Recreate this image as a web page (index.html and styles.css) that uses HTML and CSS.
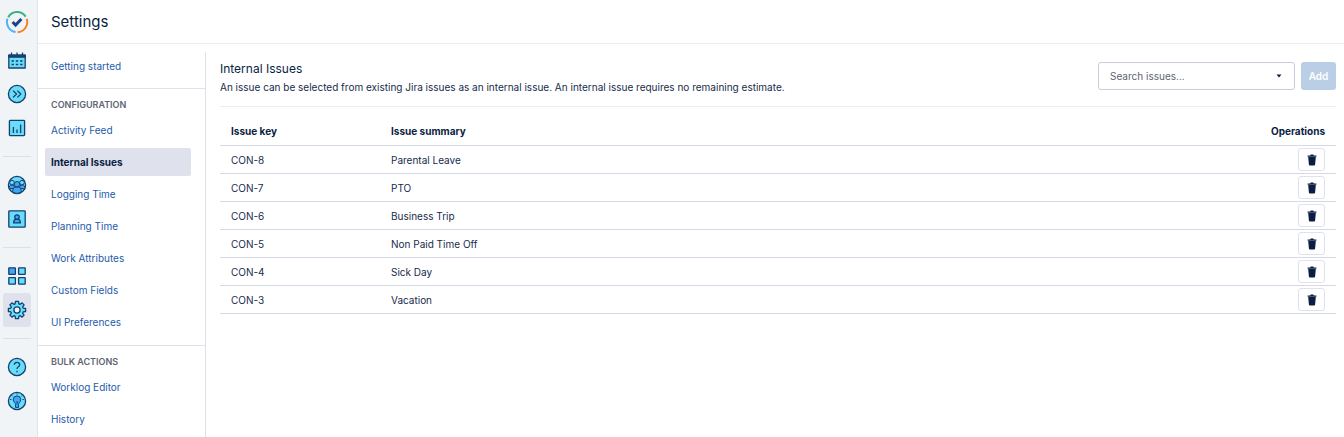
FILE: index.html
```html
<!DOCTYPE html>
<html lang="en">
<head>
    <meta charset="UTF-8">
    <meta name="viewport" content="width=device-width, initial-scale=1.0">
    <title>Settings</title>
    <link rel="stylesheet" href="styles.css">
</head>
<body>
    <svg class="sprite" aria-hidden="true">
        <symbol id="trash" viewBox="0 0 10 12">
            <path d="M.6 1.4h2.6L3.7.6h2.6l.5.8h2.6v1.4H.6z"/>
            <path d="M1.2 3.1h7.6l-.7 7.4q-.1.9-1 .9H2.9q-.9 0-1-.9z"/>
        </symbol>
    </svg>

    <nav class="rail" aria-label="Main">
        <a class="logo" href="#" aria-label="Home">
            <svg width="24" height="24" viewBox="0 0 24 24" fill="none">
                <path d="M3.2 7.2A10.2 10.2 0 0 1 20.6 6.6" stroke="#36b37e" stroke-width="2"/>
                <path d="M21.7 8.7A10.2 10.2 0 0 1 12.6 22.2" stroke="#f58220" stroke-width="2"/>
                <path d="M10.6 22.1A10.2 10.2 0 0 1 2.5 8.6" stroke="#4fb3f6" stroke-width="2"/>
                <path d="M7.6 12l3 3 5.8-6" stroke="#1d4484" stroke-width="3"/>
            </svg>
        </a>
        <a class="rail-item" href="#" aria-label="Calendar">
            <svg class="icon" viewBox="0 0 20 20">
                <path class="c" d="M1.8 5.2h16.4V18H1.8z"/>
                <path class="d" d="M1.8 5.2h16.4v2H1.8z"/>
                <path class="l" d="M4.5 2.6v3M10 2.6v3M15.5 2.6v3"/>
                <path class="l" d="M4.5 11h2.4M8.8 11h2.4M13.1 11h2.4M4.5 14.5h2.4M8.8 14.5h2.4M13.1 14.5h2.4"/>
            </svg>
        </a>
        <a class="rail-item" href="#" aria-label="Expand">
            <svg class="icon" viewBox="0 0 20 20">
                <circle class="c" cx="10" cy="10" r="8.6"/>
                <path class="l" d="M6.1 6.6L9.5 10l-3.4 3.4M10.4 6.6l3.4 3.4-3.4 3.4"/>
            </svg>
        </a>
        <a class="rail-item" href="#" aria-label="Reports">
            <svg class="icon" viewBox="0 0 20 20">
                <rect class="c" x="2.4" y="2.4" width="15.2" height="15.2" rx=".8"/>
                <path class="l" d="M6.4 9v6M10 11.5V15M13.6 6.5V15"/>
            </svg>
        </a>
        <hr class="rail-line">
        <a class="rail-item" href="#" aria-label="Teams">
            <svg class="icon" viewBox="0 0 20 20">
                <circle class="c" cx="10" cy="10" r="8.6"/>
                <g class="thin">
                    <path class="b" d="M2.4 14c-.6-2.6.4-3.9 2.4-3.9s2.8 1 2.6 3zM17.6 14c.6-2.6-.4-3.9-2.4-3.9s-2.8 1-2.6 3z"/>
                    <circle class="c" cx="5" cy="7.6" r="2.3"/>
                    <circle class="c" cx="15" cy="7.6" r="2.3"/>
                    <path class="b" d="M5.8 17.4c-.3-3.8 1.2-5.4 4.2-5.4s4.500 1.600 4.200 5.400q-4.200 2-8.400 0z"/>
                    <circle class="b" cx="10" cy="9.2" r="2.7"/>
                </g>
            </svg>
        </a>
        <a class="rail-item" href="#" aria-label="Accounts">
            <svg class="icon" viewBox="0 0 20 20">
                <rect class="c" x="1.8" y="1.8" width="16.4" height="16.4" rx=".8"/>
                <path class="b" d="M6.6 13.9c0-2.6 1.2-3.8 3.4-3.8s3.4 1.2 3.4 3.8z"/>
                <circle class="b" cx="10" cy="8" r="2.2"/>
            </svg>
        </a>
        <hr class="rail-line">
        <a class="rail-item" href="#" aria-label="Apps">
            <svg class="icon" viewBox="0 0 20 20">
                <rect class="b" x="1.8" y="1.8" width="6.6" height="6.6" rx=".4"/>
                <rect class="c" x="11.6" y="1.8" width="6.6" height="6.6" rx=".4"/>
                <rect class="c" x="1.8" y="11.6" width="6.6" height="6.6" rx=".4"/>
                <rect class="c" x="11.6" y="11.6" width="6.6" height="6.6" rx=".4"/>
            </svg>
        </a>
        <a class="rail-item active" href="#" aria-label="Settings">
            <svg class="icon" viewBox="0 0 20 20">
                <path class="c" d="M8.5 1.4h3l.4 2.4 1.2.5 2-1.4 2 2-1.4 2 .5 1.2 2.4.4v3l-2.4.4-.5 1.2 1.4 2-2 2-2-1.4-1.2.5-.4 2.4h-3l-.4-2.4-1.2-.5-2 1.4-2-2 1.4-2-.5-1.2-2.4-.4v-3l2.4-.4.5-1.2-1.4-2 2-2 2 1.4 1.2-.5z"/>
                <circle class="w" cx="10" cy="10" r="3.1"/>
            </svg>
        </a>
        <hr class="rail-line">
        <a class="rail-item" href="#" aria-label="Help">
            <svg class="icon" viewBox="0 0 20 20">
                <circle class="c" cx="10" cy="10" r="8.6"/>
                <path class="l" d="M7.3 7.8Q7.4 5.3 10 5.3t2.7 2.4Q12.7 9 11.3 9.8 10 10.5 10 12M10 13.7v1.5"/>
            </svg>
        </a>
        <a class="rail-item" href="#" aria-label="Tips">
            <svg class="icon" viewBox="0 0 20 20">
                <circle class="c" cx="10" cy="10" r="8.6"/>
                <path class="b thin" d="M8.5 13.6c0-2-2.2-2.6-2.2-5a3.7 3.7 0 0 1 7.4 0c0 2.4-2.2 3-2.2 5v2.8h-3z"/>
                <path class="l thin" d="M10 13.5V10M10 2.4v1.2M4.8 4.4l1 1M15.2 4.4l-1 1M3.2 8.5h1.3M16.8 8.5h-1.3"/>
            </svg>
        </a>
    </nav>

    <div class="page">
        <header class="page-header">
            <h1>Settings</h1>
        </header>

        <div class="columns">
            <nav class="menu" aria-label="Settings">
                <div class="menu-group">
                    <a href="#">Getting started</a>
                </div>
                <div class="menu-group">
                    <h2>CONFIGURATION</h2>
                    <a href="#">Activity Feed</a>
                    <a class="selected" href="#">Internal Issues</a>
                    <a href="#">Logging Time</a>
                    <a href="#">Planning Time</a>
                    <a href="#">Work Attributes</a>
                    <a href="#">Custom Fields</a>
                    <a href="#">UI Preferences</a>
                </div>
                <div class="menu-group">
                    <h2>BULK ACTIONS</h2>
                    <a href="#">Worklog Editor</a>
                    <a href="#">History</a>
                </div>
            </nav>

            <main class="content">
                <div class="content-header">
                    <div class="intro">
                        <h2>Internal Issues</h2>
                        <p>An issue can be selected from existing Jira issues as an internal issue. An internal issue requires no remaining estimate.</p>
                    </div>
                    <form class="add-form">
                        <select class="search" aria-label="Search issues">
                            <option>Search issues...</option>
                        </select>
                        <button class="add" type="button" disabled>Add</button>
                    </form>
                </div>

                <table class="issues">
                    <thead>
                        <tr><th class="key">Issue key</th><th>Issue summary</th><th class="ops">Operations</th></tr>
                    </thead>
                    <tbody>
                        <tr><td>CON-8</td><td>Parental Leave</td><td class="ops"><button class="delete" type="button" aria-label="Delete CON-8"><svg><use href="#trash"/></svg></button></td></tr>
                        <tr><td>CON-7</td><td>PTO</td><td class="ops"><button class="delete" type="button" aria-label="Delete CON-7"><svg><use href="#trash"/></svg></button></td></tr>
                        <tr><td>CON-6</td><td>Business Trip</td><td class="ops"><button class="delete" type="button" aria-label="Delete CON-6"><svg><use href="#trash"/></svg></button></td></tr>
                        <tr><td>CON-5</td><td>Non Paid Time Off</td><td class="ops"><button class="delete" type="button" aria-label="Delete CON-5"><svg><use href="#trash"/></svg></button></td></tr>
                        <tr><td>CON-4</td><td>Sick Day</td><td class="ops"><button class="delete" type="button" aria-label="Delete CON-4"><svg><use href="#trash"/></svg></button></td></tr>
                        <tr><td>CON-3</td><td>Vacation</td><td class="ops"><button class="delete" type="button" aria-label="Delete CON-3"><svg><use href="#trash"/></svg></button></td></tr>
                    </tbody>
                </table>
            </main>
        </div>
    </div>
</body>
</html>
```

FILE: styles.css
```css
* { box-sizing: border-box; }
body { font-family: Inter, "Liberation Sans", sans-serif; font-size: 10px; line-height: 14px; color: #172b4d; background: #fff; margin: 0; display: flex; min-height: 100vh; }
h1, h2, p { margin: 0; font-weight: 400; }
a { color: #1d5bab; text-decoration: none; }
button, select { font: inherit; }
.sprite { display: none; }

/* icon rail */
.rail { flex: none; width: 38px; background: #f0f4f7; border-right: 1px solid #dfe3ec; padding: 0 6px 0 3px; }
.logo { display: flex; justify-content: center; align-items: center; height: 43px; }
.rail-item { display: flex; justify-content: center; align-items: center; height: 34px; border-radius: 3px; }
.rail-item.active { background: #dfe1ec; }
.rail-line { border: 0; height: 1px; background: #dcdfe8; margin: 11px 0; }
.icon { width: 20px; height: 20px; stroke: #144070; stroke-width: 1.3; stroke-linejoin: round; }
.icon .c { fill: #69dcfa; }
.icon .b { fill: #42a5f5; }
.icon .w { fill: #f0f4f7; }
.icon .d { fill: #144070; }
.icon .l { fill: none; }
.icon .thin { stroke-width: 1; }

/* page */
.page { flex: 1; display: flex; flex-direction: column; }
.page-header { height: 44px; padding: 0 13px; border-bottom: 1px solid #ebecf2; display: flex; align-items: center; }
.page-header h1 { font-size: 15px; line-height: 20px; color: #091e42; }
.columns { flex: 1; display: flex; padding-top: 8px; }

/* settings menu */
.menu { flex: none; width: 168px; border-right: 1px solid #dfe1ec; }
.menu-group { padding: 9px 14px 9px 7px; display: flex; flex-direction: column; gap: 4px; }
.menu-group:first-child { padding-top: 0; padding-bottom: 8px; }
.menu-group + .menu-group { border-top: 1px solid #dfe1ec; }
.menu-group h2 { font-size: 9px; font-weight: 600; color: #5e6573; padding: 0 6px; }
.menu-group a { line-height: 28px; padding: 0 6px; border-radius: 2px; }
.menu-group a.selected { background: #dfe1ec; color: #091e42; font-weight: 700; }

/* content */
.content { flex: 1; padding: 0 8px 0 14px; }
.content-header { display: flex; justify-content: space-between; align-items: flex-start; padding: 8px 0 10px; border-bottom: 1px solid #ebecf2; }
.intro h2 { font-size: 12px; line-height: 18px; color: #091e42; }
.intro p { line-height: 18px; }
.add-form { display: flex; gap: 6px; padding-top: 2px; }
.search { appearance: none; width: 197px; height: 28px; padding: 0 11px; border: 1px solid #c9cddb; border-radius: 3px; color: #5e6573; background: #fff url("data:image/svg+xml,%3Csvg xmlns='http://www.w3.org/2000/svg' width='6' height='4'%3E%3Cpath d='M.5 .5h5L3 3.6z' fill='%23091e42'/%3E%3C/svg%3E") no-repeat right 12px center; }
.add { width: 35px; height: 28px; padding: 0; border: 0; border-radius: 3px; background: #bacfe5; color: #fff; font-weight: 600; }

/* issue table */
.issues { width: 100%; border-collapse: separate; border-spacing: 0; margin-top: 10px; }
.issues th, .issues td { height: 28px; padding: 0 11px; text-align: left; border-bottom: 1px solid #d5d9e6; }
.issues th { height: 29px; font-weight: 700; color: #091e42; }
.issues .key { width: 160px; }
.issues .ops { text-align: right; }
.delete { display: inline-flex; justify-content: center; align-items: center; vertical-align: middle; width: 27px; height: 23px; padding: 0; border: 1px solid #dfe1ec; border-radius: 3px; background: #fff; }
.delete svg { width: 10px; height: 12px; fill: #091e42; }
```
